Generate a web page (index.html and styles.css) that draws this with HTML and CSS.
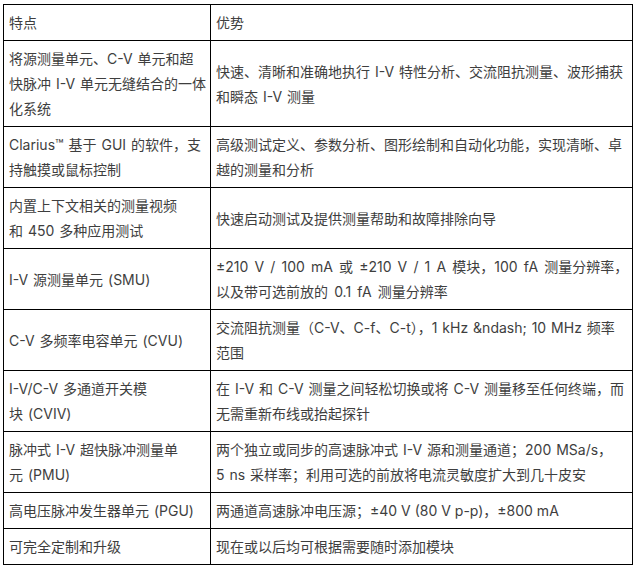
FILE: index.html
```html
<!DOCTYPE html>
<html lang="zh-CN">
<head>
<meta charset="utf-8">
<title>特点与优势</title>
<link rel="stylesheet" href="styles.css">
</head>
<body>
<table class="spec">
  <tbody>
    <tr><td class="c1">特点</td><td class="c2">优势</td></tr>
    <tr><td class="c1">将源测量单元、C-V 单元和超<br>快脉冲 I-V 单元无缝结合的一体<br>化系统</td><td class="c2">快速、清晰和准确地执行 I-V 特性分析、交流阻抗测量、波形捕获<br>和瞬态 I-V 测量</td></tr>
    <tr><td class="c1">Clarius™ 基于 GUI 的软件，支<br>持触摸或鼠标控制</td><td class="c2">高级测试定义、参数分析、图形绘制和自动化功能，实现清晰、卓<br>越的测量和分析</td></tr>
    <tr><td class="c1">内置上下文相关的测量视频<br>和 450 多种应用测试</td><td class="c2">快速启动测试及提供测量帮助和故障排除向导</td></tr>
    <tr><td class="c1">I-V 源测量单元 (SMU)</td><td class="c2 wide">±210 V / 100 mA 或 ±210 V / 1 A 模块，100 fA 测量分辨率，<br>以及带可选前放的 0.1 fA 测量分辨率</td></tr>
    <tr><td class="c1">C-V 多频率电容单元 (CVU)</td><td class="c2">交流阻抗测量（C-V、C-f、C-t），1 kHz &amp;ndash; 10 MHz 频率<br>范围</td></tr>
    <tr><td class="c1">I-V/C-V 多通道开关模<br>块 (CVIV)</td><td class="c2">在 I-V 和 C-V 测量之间轻松切换或将 C-V 测量移至任何终端，而<br>无需重新布线或抬起探针</td></tr>
    <tr><td class="c1">脉冲式 I-V 超快脉冲测量单<br>元 (PMU)</td><td class="c2">两个独立或同步的高速脉冲式 I-V 源和测量通道；200 MSa/s，<br>5 ns 采样率；利用可选的前放将电流灵敏度扩大到几十皮安</td></tr>
    <tr><td class="c1">高电压脉冲发生器单元 (PGU)</td><td class="c2 tight">两通道高速脉冲电压源；±40 V (80 V p-p)，±800 mA</td></tr>
    <tr><td class="c1">可完全定制和升级</td><td class="c2">现在或以后均可根据需要随时添加模块</td></tr>
  </tbody>
</table>
</body>
</html>
```
FILE: styles.css
```css
html, body {
  margin: 0;
  padding: 0;
  background: #ffffff;
}
body {
  padding: 4px 3px;
  font-family: "Inter", "Noto Sans CJK SC", sans-serif;
  font-size: 14px;
  line-height: 25px;
  color: #3e3e3e;
  word-spacing: 1px;
}
.spec {
  border-collapse: collapse;
  width: 630px;
  table-layout: fixed;
}
.spec td {
  border: 1px solid #000000;
  padding: 5px;
  vertical-align: middle;
  text-align: left;
  white-space: nowrap;
}
.spec .c1 {
  width: 196px;
}
.spec .c2 {
  width: auto;
}
.spec .wide {
  word-spacing: 2.2px;
}
.spec .tight {
  word-spacing: 0;
}
```
